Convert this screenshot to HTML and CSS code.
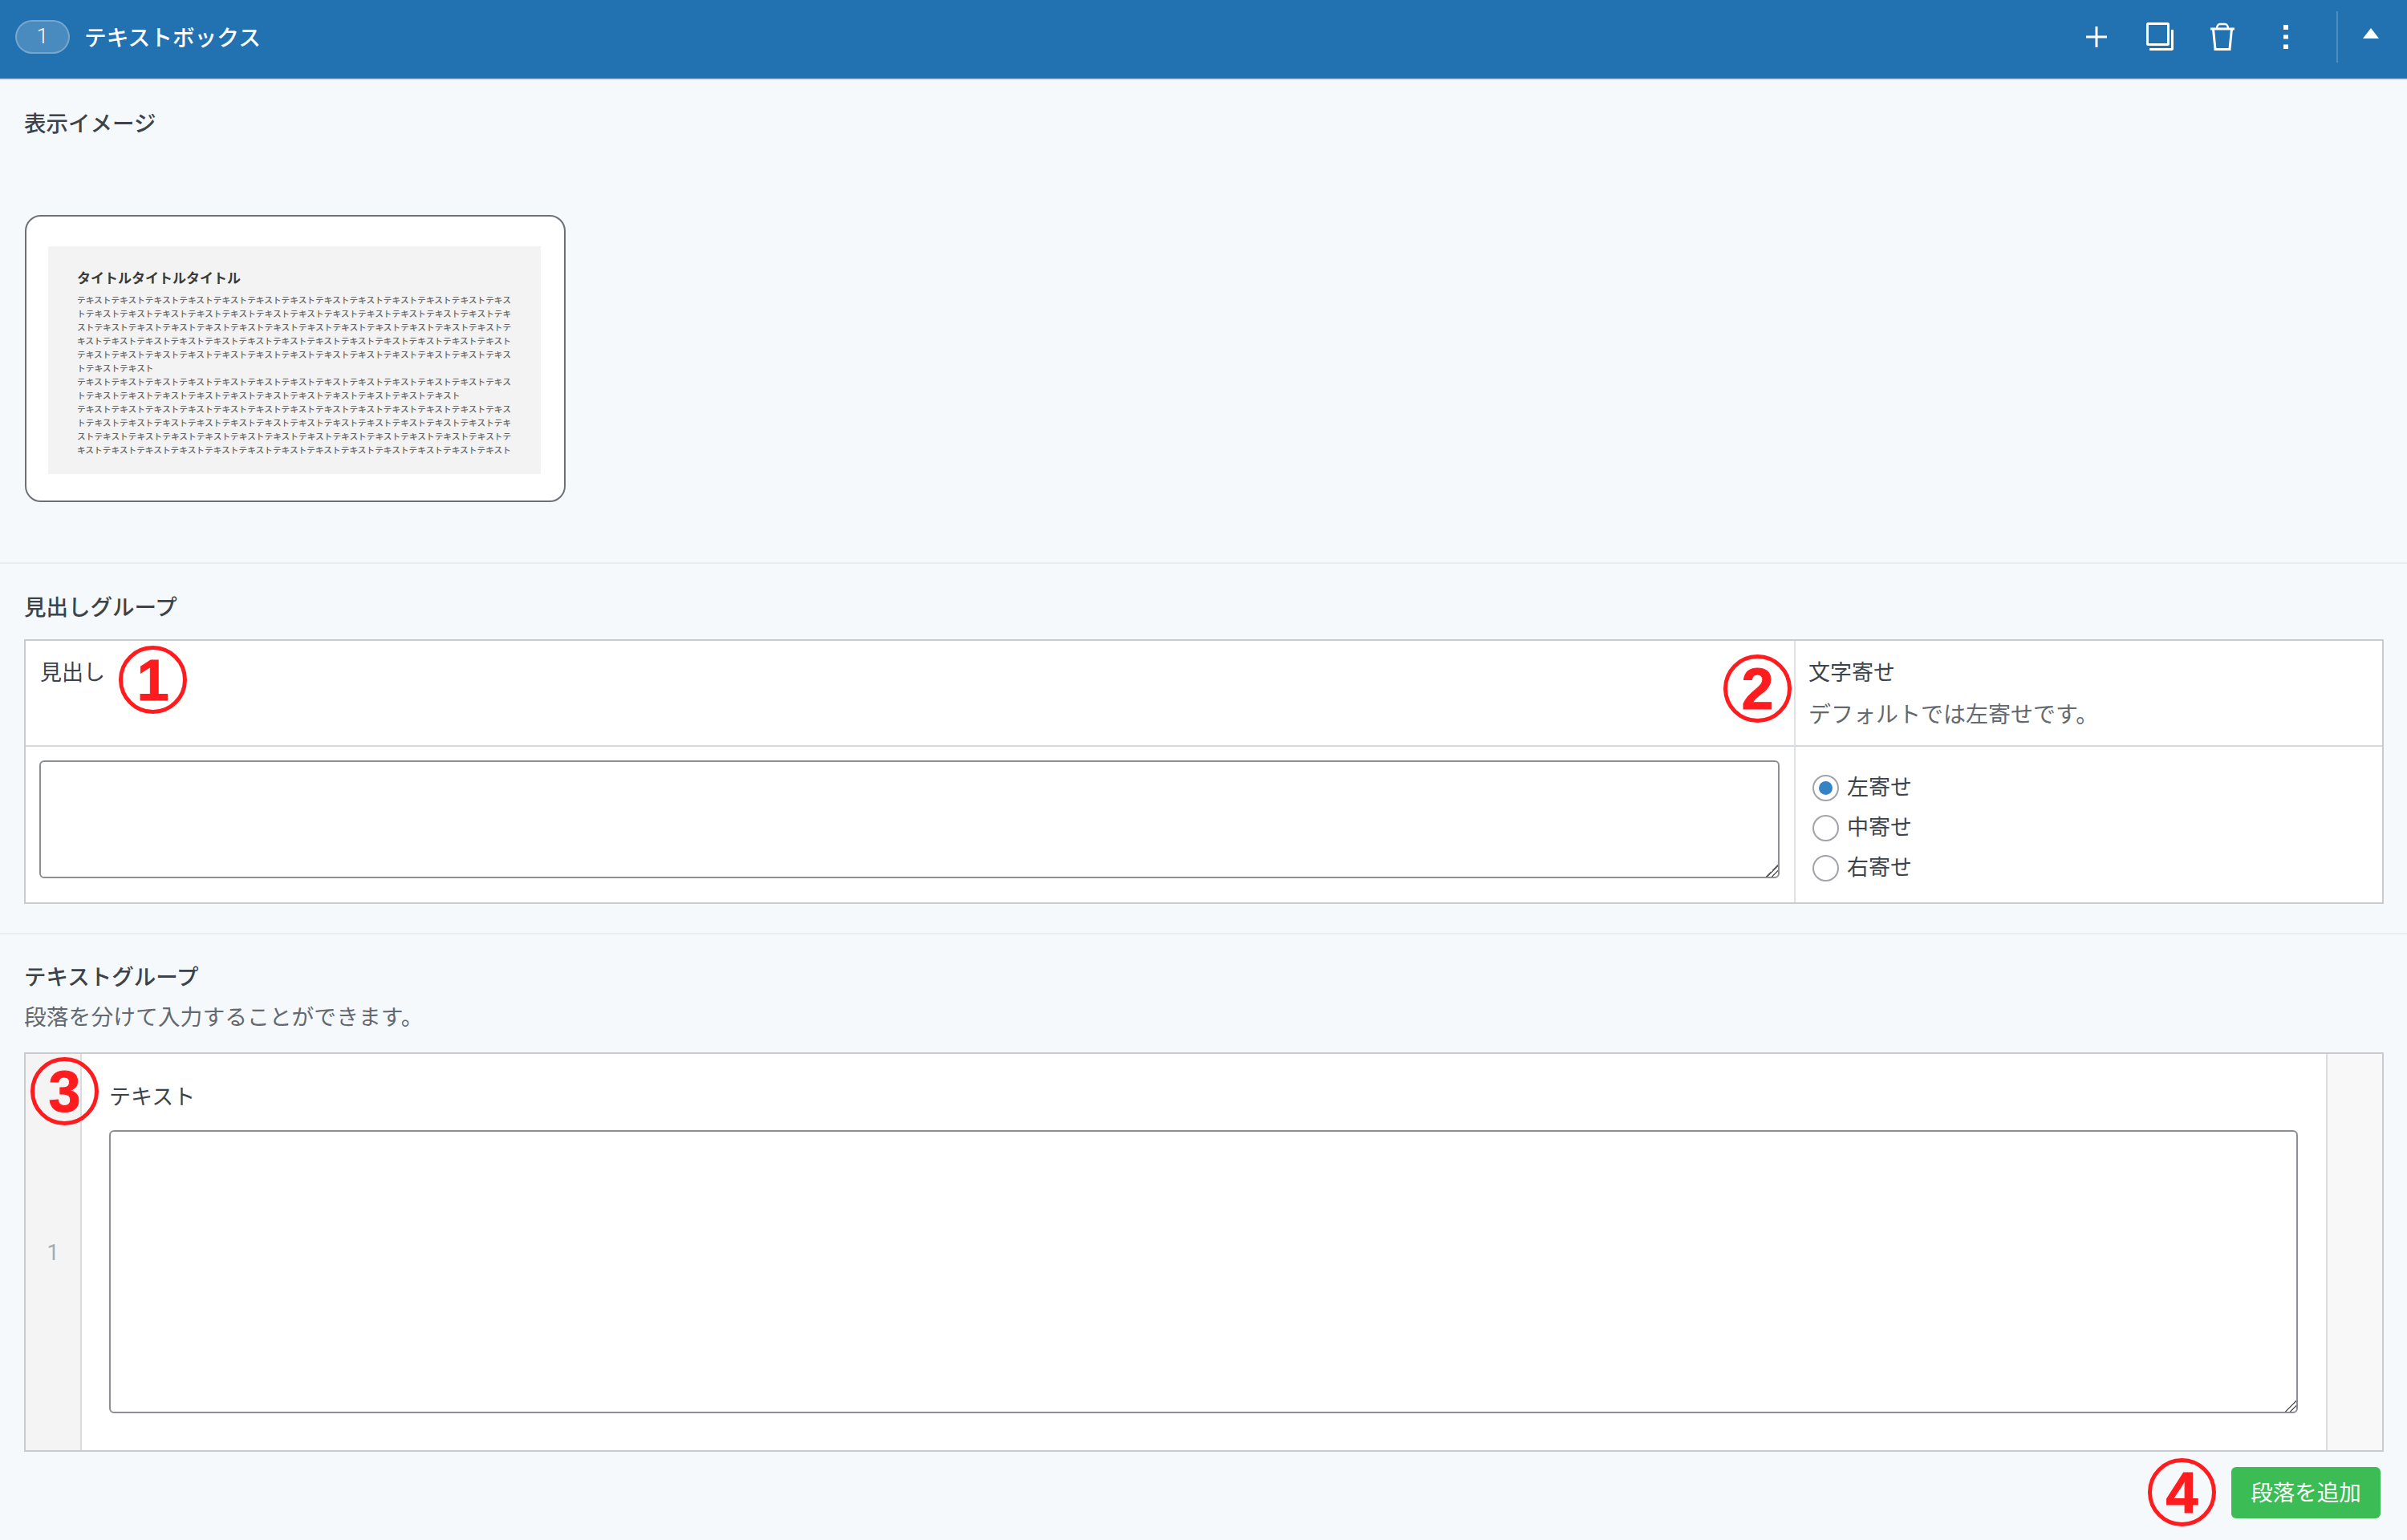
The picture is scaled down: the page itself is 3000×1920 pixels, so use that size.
FILE: index.html

```html
<!DOCTYPE html>
<html lang="ja">
<head>
    <meta charset="UTF-8">
    <title>テキストボックス</title>
    <link rel="stylesheet" href="styles.css">
</head>
<body>
    <div class="block-head">
        <span class="badge">1</span>
        <span class="block-title">テキストボックス</span>
        <div class="head-actions">
            <span class="head-btn">
                <svg width="30" height="30" viewBox="0 0 30 30"><path d="M15 2V28M2 15H28" stroke="#fff" stroke-width="3" fill="none"/></svg>
            </span>
            <span class="head-btn">
                <svg width="36" height="36" viewBox="0 0 36 36"><rect x="2.5" y="1.5" width="26" height="26" rx="1" stroke="#fff" stroke-width="3" fill="none"/><path d="M5 33.5H32.5a1 1 0 0 0 1-1V9" stroke="#fff" stroke-width="3" fill="none"/></svg>
            </span>
            <span class="head-btn">
                <svg width="32" height="36" viewBox="0 0 32 36"><path d="M1 8H31" stroke="#fff" stroke-width="3" fill="none"/><path d="M9 8C9 4 11 2 13 2H19C21 2 23 4 23 8" stroke="#fff" stroke-width="2.5" fill="none"/><path d="M4.5 8L7 33.5H25L27.5 8" stroke="#fff" stroke-width="3" fill="none"/></svg>
            </span>
            <span class="head-btn">
                <svg width="6" height="30" viewBox="0 0 6 30"><rect width="6" height="6" fill="#fff"/><rect y="12.5" width="6" height="5" fill="#fff"/><rect y="24.5" width="6" height="5.5" fill="#fff"/></svg>
            </span>
        </div>
        <span class="head-divider"></span>
        <span class="head-caret">
            <svg width="20" height="13" viewBox="0 0 20 13"><polygon points="10,0 20,13 0,13" fill="#fff"/></svg>
        </span>
    </div>

    <section class="group group-preview">
        <h3 class="group-title">表示イメージ</h3>
        <div class="preview-card">
            <div class="preview-image">
                <div class="preview-heading">タイトルタイトルタイトル</div>
                <p class="preview-text">テキストテキストテキストテキストテキストテキストテキストテキストテキストテキストテキストテキストテキストテキストテキストテキストテキストテキストテキストテキストテキストテキストテキストテキストテキストテキストテキストテキストテキストテキストテキストテキストテキストテキストテキストテキストテキストテキストテキストテキストテキストテキストテキストテキストテキストテキストテキストテキストテキストテキストテキストテキストテキストテキストテキストテキストテキストテキストテキストテキストテキストテキストテキストテキストテキストテキスト</p>
                <p class="preview-text">テキストテキストテキストテキストテキストテキストテキストテキストテキストテキストテキストテキストテキストテキストテキストテキストテキストテキストテキストテキストテキストテキストテキストテキスト</p>
                <p class="preview-text">テキストテキストテキストテキストテキストテキストテキストテキストテキストテキストテキストテキストテキストテキストテキストテキストテキストテキストテキストテキストテキストテキストテキストテキストテキストテキストテキストテキストテキストテキストテキストテキストテキストテキストテキストテキストテキストテキストテキストテキストテキストテキストテキストテキストテキストテキストテキストテキストテキストテキストテキスト</p>
            </div>
        </div>
    </section>

    <section class="group group-heading">
        <h3 class="group-title">見出しグループ</h3>
        <div class="field-table">
            <div class="cell cell-label">見出し</div>
            <div class="cell cell-side cell-label-side">
                <div class="label-text">文字寄せ</div>
                <div class="help-text">デフォルトでは左寄せです。</div>
            </div>
            <div class="cell cell-input">
                <textarea class="text-input input-heading"></textarea>
            </div>
            <div class="cell cell-side cell-radios">
                <label class="radio-row"><input type="radio" name="align" checked>左寄せ</label>
                <label class="radio-row"><input type="radio" name="align">中寄せ</label>
                <label class="radio-row"><input type="radio" name="align">右寄せ</label>
            </div>
            <span class="mark mark-over mark-one">1</span>
            <span class="mark mark-over mark-two">2</span>
        </div>
    </section>

    <section class="group group-text">
        <h3 class="group-title">テキストグループ</h3>
        <div class="group-desc">段落を分けて入力することができます。</div>
        <div class="repeat-table">
            <div class="repeat-index">1</div>
            <div class="repeat-body">
                <div class="label-text">テキスト</div>
                <textarea class="text-input input-text"></textarea>
            </div>
            <div class="repeat-side"></div>
            <span class="mark mark-over mark-three">3</span>
        </div>
        <div class="repeat-foot">
            <span class="mark">4</span>
            <button class="add-btn">段落を追加</button>
        </div>
    </section>
</body>
</html>
```

FILE: styles.css

```css
* {
    box-sizing: border-box;
}
body {
    margin: 0;
    background-color: #f6f9fc;
    color: #3c434a;
    font-family: Roboto, "Noto Sans CJK JP", sans-serif;
    font-size: 27px;
    line-height: 40px;
}
.block-head {
    display: flex;
    align-items: center;
    height: 100px;
    padding: 0 0 6px 19px;
    background-color: #2271b1;
    border-bottom: 2px solid #d3ddf3;
    color: #fff;
}
.badge {
    width: 68px;
    height: 42px;
    border: 2px solid rgba(255, 255, 255, 0.25);
    border-radius: 21px;
    background-color: rgba(255, 255, 255, 0.18);
    text-align: center;
    font-size: 26px;
    font-weight: 300;
    line-height: 36px;
}
.block-title {
    margin: 3px 0 0 18px;
    font-size: 27.7px;
    font-weight: 500;
}
.head-actions {
    display: flex;
    margin-left: auto;
}
.head-btn {
    display: flex;
    justify-content: center;
    align-items: center;
    width: 78.6px;
    height: 64px;
}
.head-divider {
    width: 2px;
    height: 64px;
    margin-left: 24px;
    background-color: rgba(255, 255, 255, 0.2);
}
.head-caret {
    display: flex;
    justify-content: center;
    width: 86px;
    padding-right: 4px;
    margin-top: -9px;
}
.group {
    border-bottom: 2px solid #e9ecf1;
    padding: 35px 29px 0 30px;
}
.group-title {
    margin: 0;
    font-size: 27.5px;
    font-weight: 500;
    line-height: 40px;
}
.group-preview {
    height: 603px;
}
.preview-card {
    width: 674px;
    height: 358px;
    margin: 93px 0 0 1px;
    padding: 37px 27px;
    background-color: #fff;
    border: 2px solid #6e7074;
    border-radius: 20px;
}
.preview-image {
    width: 614px;
    height: 284px;
    padding: 28px 0 0 36px;
    background-color: #f3f3f3;
}
.preview-heading {
    font-size: 17px;
    font-weight: 700;
    line-height: 24px;
    color: #3a3a3a;
}
.preview-text {
    width: 546px;
    margin: 0;
    font-size: 10.7px;
    font-weight: 500;
    line-height: 17px;
    color: #666;
}
.preview-heading + .preview-text {
    margin-top: 7px;
}
.group-heading {
    height: 462px;
}
.field-table {
    position: relative;
    display: grid;
    grid-template-columns: 2204px 1fr;
    grid-template-rows: 132px 194px;
    margin-top: 19px;
    background-color: #fff;
    border: 2px solid #c8ccd1;
}
.cell {
    padding: 20px 18px 0;
}
.cell-label,
.cell-label-side {
    border-bottom: 2px solid #d5d8dc;
}
.cell-side {
    border-left: 2px solid #dfe1e4;
    padding-left: 16px;
}
.cell-input {
    padding: 17px 18px 0 17px;
}
.help-text {
    margin-top: 13px;
    color: #646970;
    font-size: 28px;
}
.text-input {
    display: block;
    width: 100%;
    margin: 0;
    background-color: #fff;
    border: 2px solid #8c8f94;
    border-radius: 6px;
}
.text-input::-webkit-resizer {
    background: linear-gradient(135deg, transparent 50%, #666 50%, #666 57%, transparent 57%, transparent 72%, #666 72%, #666 79%, transparent 79%);
}
.input-heading {
    height: 147px;
}
.input-text {
    height: 353px;
    margin-top: 21px;
}
.cell-radios {
    display: flex;
    flex-direction: column;
    gap: 16px;
    padding: 34px 0 0 21px;
}
.radio-row {
    display: flex;
    align-items: center;
    gap: 10px;
    height: 34px;
    line-height: 34px;
}
.radio-row input {
    appearance: none;
    display: flex;
    justify-content: center;
    align-items: center;
    width: 33px;
    height: 33px;
    margin: 0;
    background-color: #fff;
    border: 2px solid #a0a3a8;
    border-radius: 50%;
}
.radio-row input:checked::before {
    content: "";
    width: 17px;
    height: 17px;
    border-radius: 50%;
    background-color: #3582c4;
}
.mark {
    display: flex;
    justify-content: center;
    align-items: center;
    width: 85px;
    height: 85px;
    background: transparent;
    border: 5px solid #ff1c1f;
    border-radius: 50%;
    color: #ff1c1f;
    font-family: "Liberation Sans", sans-serif;
    font-size: 72px;
    font-weight: 700;
    line-height: 1;
    -webkit-text-stroke: 1px #ff1c1f;
}
.mark-over {
    position: absolute;
}
.mark-one {
    left: 116px;
    top: 6px;
}
.mark-two {
    left: 2116px;
    top: 17px;
}
.mark-three {
    left: 6px;
    top: 4px;
}
.group-text {
    border-bottom: 0;
    padding-top: 34px;
}
.group-desc {
    margin-top: 10px;
    color: #646970;
    font-size: 27.8px;
}
.repeat-table {
    position: relative;
    display: flex;
    height: 498px;
    margin-top: 23px;
    background-color: #fff;
    border: 2px solid #c8ccd1;
}
.repeat-index {
    display: flex;
    justify-content: center;
    align-items: center;
    width: 70px;
    padding-top: 2px;
    background-color: #f4f4f4;
    border-right: 2px solid #dcdcdc;
    color: #a7aaad;
    font-size: 27px;
}
.repeat-body {
    flex: 1;
    padding: 34px 35px 0 34px;
}
.repeat-side {
    width: 70px;
    background-color: #f8f8f8;
    border-left: 2px solid #dcdcdc;
}
.repeat-foot {
    display: flex;
    justify-content: flex-end;
    align-items: center;
    gap: 19px;
    padding: 8px 4px 0 0;
}
.add-btn {
    width: 186px;
    height: 64px;
    padding: 0 0 4px;
    background-color: #3bbc54;
    border: 0;
    border-radius: 6px;
    color: #fff;
    font-family: inherit;
    font-size: 27.5px;
}
```
